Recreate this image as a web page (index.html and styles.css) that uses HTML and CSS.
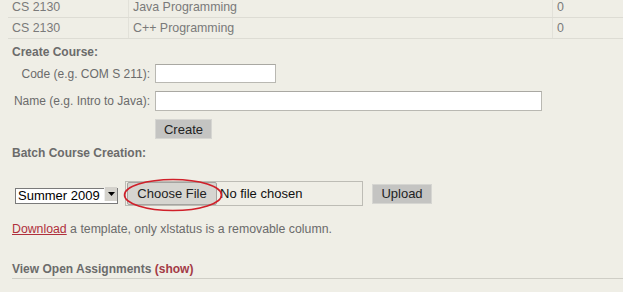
FILE: index.html
```html
<!DOCTYPE html>
<html lang="en">
<head>
  <meta charset="UTF-8">
  <title>Courses</title>
  <link rel="stylesheet" href="styles.css">
</head>
<body>

  <table class="courses">
    <tr>
      <td class="c-code">CS 2130</td>
      <td class="c-name">Java Programming</td>
      <td class="c-num">0</td>
    </tr>
    <tr>
      <td class="c-code">CS 2130</td>
      <td class="c-name">C++ Programming</td>
      <td class="c-num">0</td>
    </tr>
  </table>

  <div class="section">
    <h3>Create Course:</h3>
    <div class="create-form">
      <label class="lbl lbl-code">Code (e.g. COM S 211):</label>
      <input type="text" class="txt txt-code">
      <label class="lbl">Name (e.g. Intro to Java):</label>
      <input type="text" class="txt txt-name">
      <span></span>
      <div><button class="btn btn-create">Create</button></div>
    </div>
  </div>

  <div class="section">
    <h3>Batch Course Creation:</h3>
    <div class="batch-row">
      <div class="sel-wrap">
        <select class="sel">
          <option>Summer 2009</option>
        </select>
        <span class="sel-arrow">
          <svg width="7" height="4" viewBox="0 0 7 4"><path d="M0 0h7L3.5 4z" fill="#000"/></svg>
        </span>
      </div>
      <div class="file-box">
        <span class="file-btn">Choose File</span>
        <span class="file-text">No file chosen</span>
        <!-- red mark round the button -->
        <svg class="circle" width="102" height="36" viewBox="0 0 102 36">
          <ellipse cx="51" cy="18" rx="48.5" ry="15.5" fill="none" stroke="#d0202a" stroke-width="1.6"/>
        </svg>
      </div>
      <button class="btn btn-upload">Upload</button>
    </div>
    <p class="note"><a href="#">Download</a> a template, only xlstatus is a removable column.</p>
  </div>

  <div class="section assign">
    <h3>View Open Assignments <span class="show">(show)</span></h3>
  </div>

</body>
</html>
```

FILE: styles.css
```css
body {
  margin: 0;
  background: #efeee6;
  font-family: "Liberation Sans", Arial, sans-serif;
  color: #6b6b6b;
  overflow: hidden;
}
.courses {
  border-collapse: collapse;
  width: 640px;
  margin: -3px 0 0 8px;
  font-size: 12.4px;
  color: #7a7a7a;
}
.courses td {
  height: 20px;
  padding: 0 4px;
  border-bottom: 1px solid #dddcd4;
  border-right: 1px solid #e2e1d9;
}
.c-code {
  width: 112px;
}
.c-name {
  width: 415px;
}
.section {
  padding-left: 12px;
}
h3 {
  margin: 0;
  font-size: 12px;
  font-weight: bold;
  color: #6b6b6b;
}
.section:nth-of-type(1) h3 {
  margin-top: 6px;
}
.create-form {
  display: grid;
  grid-template-columns: 138px auto;
  column-gap: 5px;
  row-gap: 8px;
  align-items: center;
  margin-top: 5px;
  font-size: 12px;
}
.lbl {
  text-align: right;
  white-space: nowrap;
}
.txt {
  margin: 0;
  padding: 0 3px;
  height: 19px;
  box-sizing: border-box;
  border: 1px solid #b9b8b2;
  border-top-color: #a9a8a2;
  background: #fff;
  font-family: inherit;
}
.txt-code {
  width: 121px;
}
.txt-name {
  width: 387px;
  height: 20px;
}
.btn {
  margin: 0;
  padding: 0;
  background: #c4c4c2;
  border: 1px solid #d6d6d2;
  font-family: inherit;
  font-size: 13px;
  color: #222;
  cursor: pointer;
}
.btn-create {
  width: 57px;
  height: 20px;
}
.section:nth-of-type(2) h3 {
  margin-top: 7px;
}
.batch-row {
  display: flex;
  align-items: center;
  margin-top: 21px;
  padding-left: 3px;
}
.sel-wrap {
  position: relative;
  width: 103px;
  height: 16px;
}
.sel {
  appearance: none;
  -webkit-appearance: none;
  margin: 0;
  width: 103px;
  height: 16px;
  box-sizing: border-box;
  padding: 0 0 0 2px;
  border: 1px solid #7a7a7a;
  border-radius: 0;
  background: #fff;
  font-family: inherit;
  font-size: 13px;
  line-height: 14px;
  color: #000;
}
.sel-arrow {
  position: absolute;
  top: 1px;
  right: 1px;
  width: 12px;
  height: 14px;
  background: #d4d2cc;
  border-left: 1px solid #eee;
  display: flex;
  align-items: center;
  justify-content: center;
}
.file-box {
  position: relative;
  display: flex;
  align-items: center;
  margin-left: 7px;
  width: 236px;
  height: 23px;
  border: 1px solid #bdbcb5;
}
.file-btn {
  box-sizing: border-box;
  height: 23px;
  width: 90px;
  margin-left: 1px;
  display: flex;
  align-items: center;
  justify-content: center;
  background: #d6d5d0;
  border: 1px solid #a5a4a0;
  border-radius: 2px;
  font-size: 13px;
  color: #222;
}
.file-text {
  margin-left: 3px;
  font-size: 13px;
  color: #111;
}
.circle {
  position: absolute;
  left: -4px;
  top: -5px;
}
.btn-upload {
  margin-left: 9px;
  width: 60px;
  height: 20px;
}
.note {
  margin: 16px 0 0;
  font-size: 12.3px;
}
.note a {
  color: #b0303c;
}
.assign h3 {
  margin-top: 26px;
  padding-bottom: 2px;
  border-bottom: 1px solid #cfcec6;
}
.show {
  color: #a33a45;
}
```
